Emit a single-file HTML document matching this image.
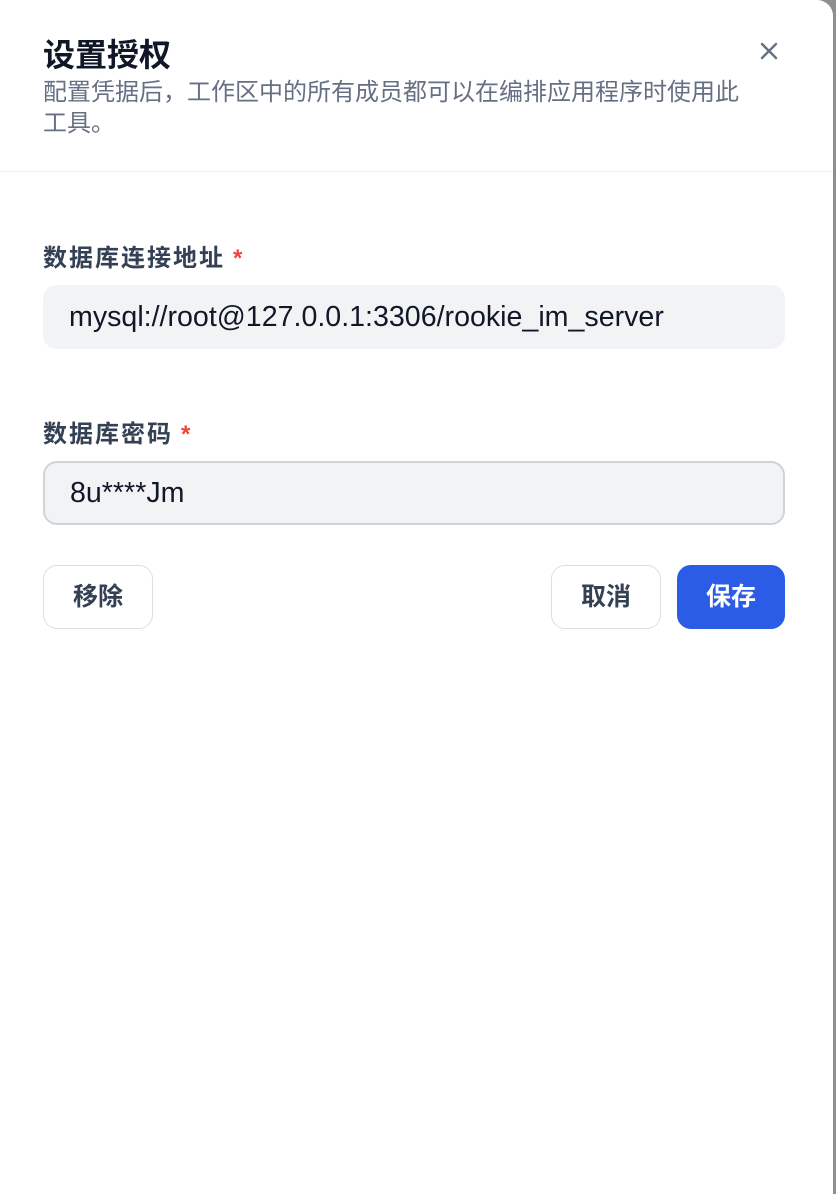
<!DOCTYPE html>
<html><head><meta charset="utf-8"><style>
*{box-sizing:border-box;margin:0;padding:0}
body{width:836px;height:1194px;background:#8e8f92;font-family:"Liberation Sans","Noto Sans CJK SC",sans-serif;overflow:hidden}
.p{position:absolute;left:0;top:0;width:833px;height:1194px;background:#fff;border-top-right-radius:16px}
.t{position:absolute;left:43px;top:30px;font-size:32px;font-weight:700;color:#101828}
.d{position:absolute;left:43px;top:77px;width:780px;font-size:24px;line-height:31px;color:#667085}
.x{position:absolute;left:759px;top:41px}
.hr{position:absolute;left:0;top:171px;width:833px;height:1px;background:#f0f1f3}
.l{position:absolute;left:43px;font-size:24px;letter-spacing:2px;font-weight:700;color:#344054}
.l span{color:#f04438;margin-left:8px}
.i{position:absolute;left:43px;width:742px;height:64px;border-radius:14px;background:#f2f3f5;font-size:28.6px;color:#101828;padding-left:26px;line-height:64px}
.b{position:absolute;top:565px;height:64px;border-radius:14px;border:1px solid #dcdee2;background:#fff;font-size:25px;font-weight:700;color:#344054;text-align:center;line-height:62px}
</style></head><body><div class="p">
<div class="t">设置授权</div>
<div class="d">配置凭据后，工作区中的所有成员都可以在编排应用程序时使用此<br>工具。</div>
<svg class="x" width="20" height="20" viewBox="0 0 20 20"><path d="M3 3L17 17M17 3L3 17" stroke="#667085" stroke-width="2.4" stroke-linecap="round"/></svg>
<div class="hr"></div>
<div class="l" style="top:238px">数据库连接地址<span>*</span></div>
<div class="i" style="top:285px">mysql://root@127.0.0.1:3306/rookie_im_server</div>
<div class="l" style="top:414px">数据库密码<span>*</span></div>
<div class="i" style="top:461px;border:2px solid #d0d3d9;line-height:60px;padding-left:25px">8u****Jm</div>
<div class="b" style="left:43px;width:110px">移除</div>
<div class="b" style="left:551px;width:110px">取消</div>
<div class="b" style="left:677px;width:108px;background:#2b5ce6;border-color:#2b5ce6;color:#fff">保存</div>
</div></body></html>
